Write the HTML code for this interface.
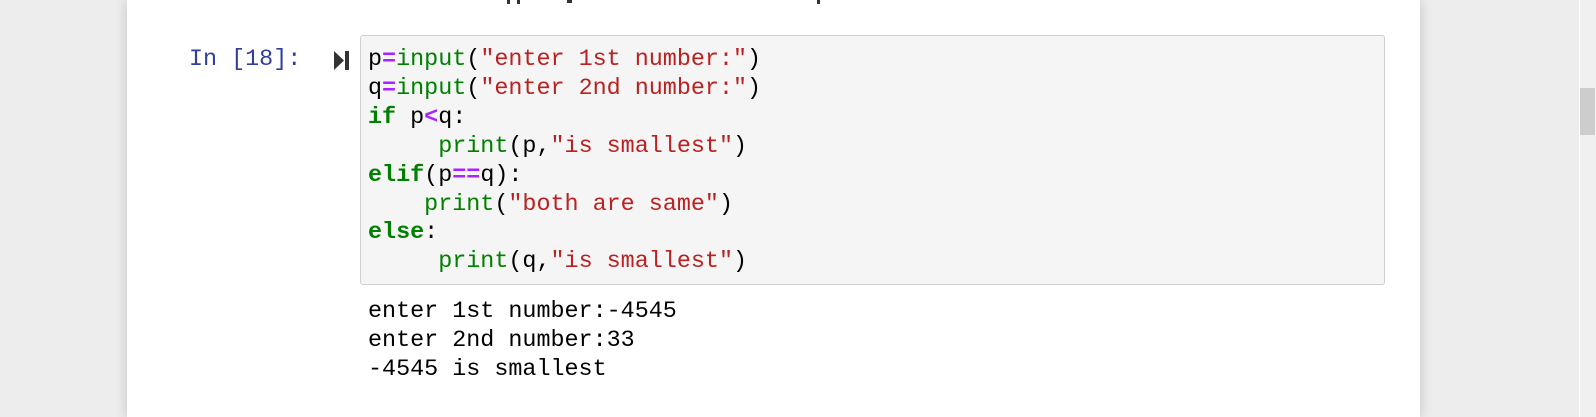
<!DOCTYPE html>
<html><head><style>
html,body{margin:0;padding:0;}
body{width:1596px;height:417px;background:#ededed;position:relative;overflow:hidden;font-family:"Liberation Mono",monospace;}
.panel{position:absolute;left:127px;top:0;width:1293px;height:417px;background:#fff;box-shadow:0 0 12px rgba(0,0,0,0.18);}
.sb{position:absolute;left:1579px;top:0;width:17px;height:417px;background:#f0f0f0;border-left:1px solid #fff;}
.thumb{position:absolute;left:1580px;top:88px;width:15px;height:47px;background:#cdcdcd;}
.prompt{position:absolute;left:189px;top:46px;color:#303f9f;font-size:23.4px;line-height:29px;}
.box{position:absolute;left:360px;top:35px;width:1023px;height:248px;background:#f5f5f5;border:1px solid #cfcfcf;border-radius:3px;}
pre{margin:0;font-family:"Liberation Mono",monospace;font-size:23.4px;line-height:28.9px;color:#000;}
.code{position:absolute;left:368px;top:46px;}
.out{position:absolute;left:368px;top:298px;}
.k{color:#008000;font-weight:bold}.o{color:#aa22ff;font-weight:bold}.b{color:#008000}.s{color:#ba2121}
</style></head><body>
<div class="panel"></div>
<div class="sb"></div><div class="thumb"></div>
<div style="position:absolute;left:507px;top:0;width:3px;height:4px;background:#333"></div>
<div style="position:absolute;left:517px;top:0;width:3px;height:4px;background:#333"></div>
<div style="position:absolute;left:567px;top:0;width:5px;height:3px;background:#333"></div>
<div style="position:absolute;left:817px;top:0;width:3px;height:4px;background:#333"></div>
<div class="prompt">In [18]:</div>
<svg style="position:absolute;left:333px;top:50px" width="18" height="21"><path d="M1 1 L11 10.5 L1 20 Z" fill="#333"/><rect x="12" y="1" width="4" height="19" fill="#333"/></svg>
<div class="box"></div>
<pre class="code">p<span class="o">=</span><span class="b">input</span>(<span class="s">"enter 1st number:"</span>)
q<span class="o">=</span><span class="b">input</span>(<span class="s">"enter 2nd number:"</span>)
<span class="k">if</span> p<span class="o">&lt;</span>q:
     <span class="b">print</span>(p,<span class="s">"is smallest"</span>)
<span class="k">elif</span>(p<span class="o">==</span>q):
    <span class="b">print</span>(<span class="s">"both are same"</span>)
<span class="k">else</span>:
     <span class="b">print</span>(q,<span class="s">"is smallest"</span>)</pre>
<pre class="out">enter 1st number:-4545
enter 2nd number:33
-4545 is smallest</pre>
</body></html>
